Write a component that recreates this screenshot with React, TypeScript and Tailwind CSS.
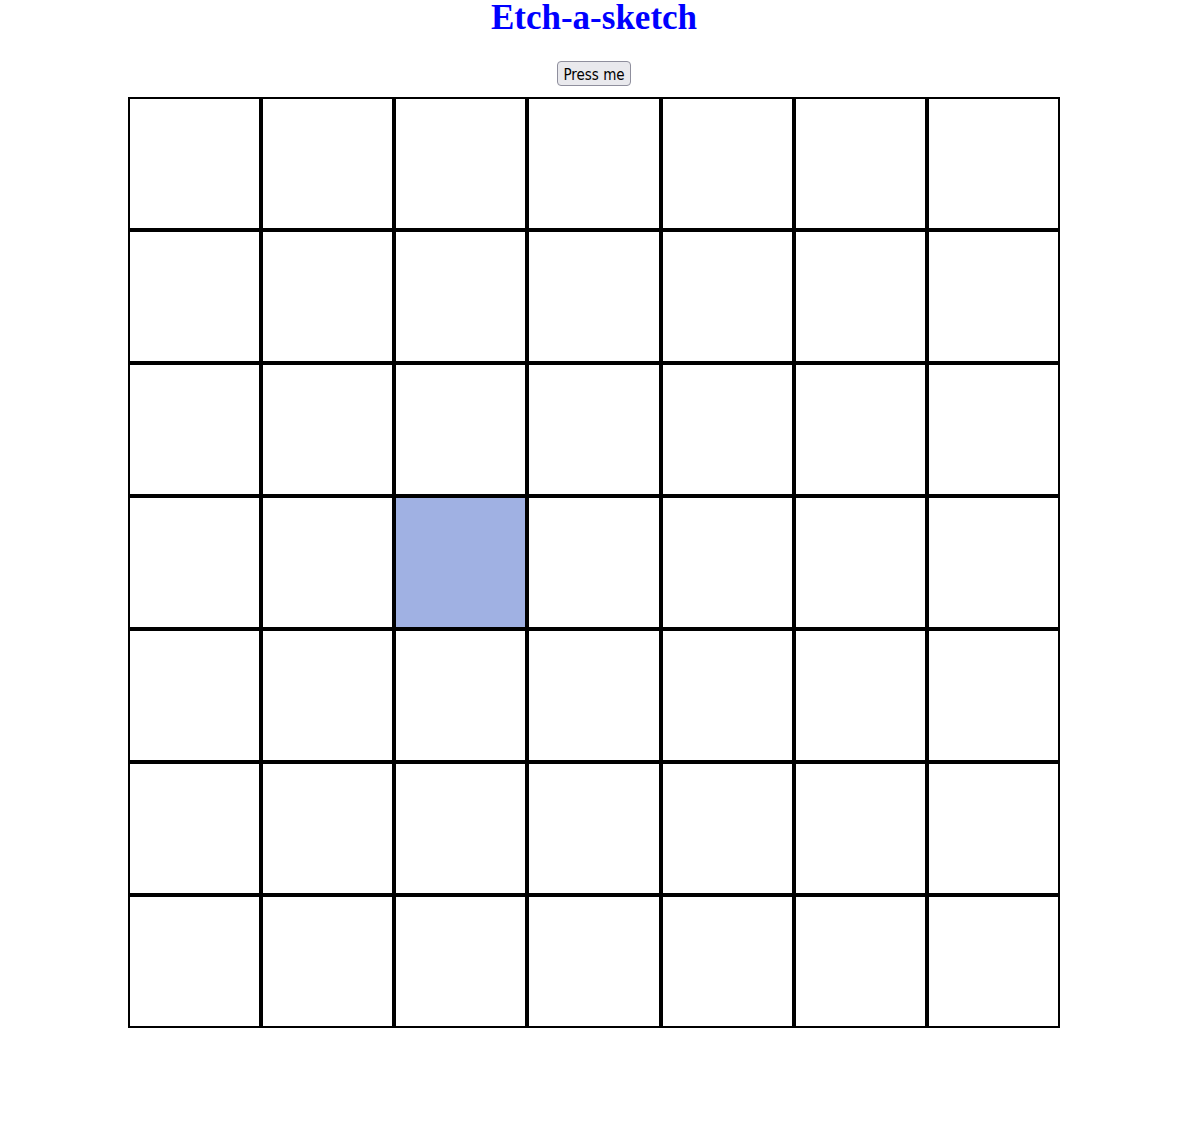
import { useState } from "react";

const SIZE = 7;
const cells = Array.from({ length: SIZE * SIZE }, (_, i) => i);

export default function App() {
  const [active, setActive] = useState(23);
  return (
    <main className="flex min-h-screen flex-col items-center bg-white pr-[15px] font-['Liberation_Serif',serif]">
      <h1 className="text-[35px] leading-9 font-bold text-[#0000ff]">Etch-a-sketch</h1>
      <button
        type="button"
        onClick={() => setActive(-1)}
        className="mt-[25px] mb-[11px] rounded-sm border border-[#8f8f9d] bg-[#e9e9ed] px-[5px] pt-[3px] font-['DejaVu_Sans_Condensed','Noto_Sans',sans-serif] text-[15px] leading-5 text-black"
      >
        Press me
      </button>
      <div className="grid aspect-[932/931] w-full max-w-[932px] grid-cols-7 grid-rows-7">
        {cells.map((i) => (
          <div
            key={i}
            onMouseEnter={() => setActive(i)}
            className={`border-2 border-black ${i === active ? "bg-[#a0b1e3]" : "bg-white"}`}
          />
        ))}
      </div>
    </main>
  );
}
